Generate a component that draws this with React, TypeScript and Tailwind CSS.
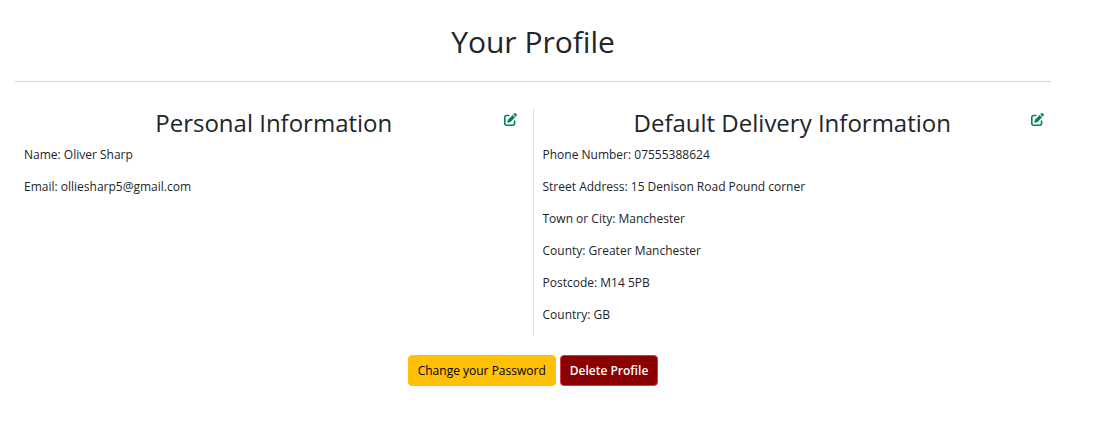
import { FaPenToSquare } from "react-icons/fa6";

type Detail = { label: string; value: string };

const personal: Detail[] = [
  { label: "Name", value: "Oliver Sharp" },
  { label: "Email", value: "olliesharp5@gmail.com" },
];

const delivery: Detail[] = [
  { label: "Phone Number", value: "07555388624" },
  { label: "Street Address", value: "15 Denison Road Pound corner" },
  { label: "Town or City", value: "Manchester" },
  { label: "County", value: "Greater Manchester" },
  { label: "Postcode", value: "M14 5PB" },
  { label: "Country", value: "GB" },
];

function Section({ title, details, className, headerClass }: {
  title: string;
  details: Detail[];
  className: string;
  headerClass: string;
}) {
  return (
    <section className={`flex-1 ${className}`}>
      <div className={`grid grid-cols-[1fr_auto_1fr] ${headerClass}`}>
        <h2 className="col-start-2 text-[24px] leading-[30px]">{title}</h2>
        <a href="#edit" aria-label={`Edit ${title}`} className="mt-[5px] justify-self-end self-start text-[#08805f]">
          <FaPenToSquare className="size-[13px]" />
        </a>
      </div>
      <div className="mt-[7px] flex flex-col gap-3 px-[9px] pb-[11px]">
        {details.map((d) => (
          <p key={d.label} className="text-[12px] leading-5">
            {d.label}: {d.value}
          </p>
        ))}
      </div>
    </section>
  );
}

export default function App() {
  return (
    <main className="bg-white pt-6 pr-11 pb-10 pl-[15px] font-['Trebuchet_MS','Open_Sans',sans-serif] text-[#212529]">
      <h1 className="text-center text-[30px] leading-9">Your Profile</h1>
      <hr className="mt-[21px] border-[#c1dfd7]" />
      <div className="mt-[26px] flex">
        <Section title="Personal Information" details={personal} className="" headerClass="px-4" />
        <Section title="Default Delivery Information" details={delivery} className="border-l border-[#dee2e6]" headerClass="px-[7px]" />
      </div>
      <div className="mt-[19px] flex justify-center gap-1 text-[12px] leading-[19px]">
        <button type="button" className="rounded border border-[#ffc107] bg-[#ffc107] px-[9px] py-[5px] text-black">
          Change your Password
        </button>
        <button type="button" className="rounded border border-[#dc3545] bg-[#8b0000] px-[9px] py-[5px] font-semibold text-white">
          Delete Profile
        </button>
      </div>
    </main>
  );
}
